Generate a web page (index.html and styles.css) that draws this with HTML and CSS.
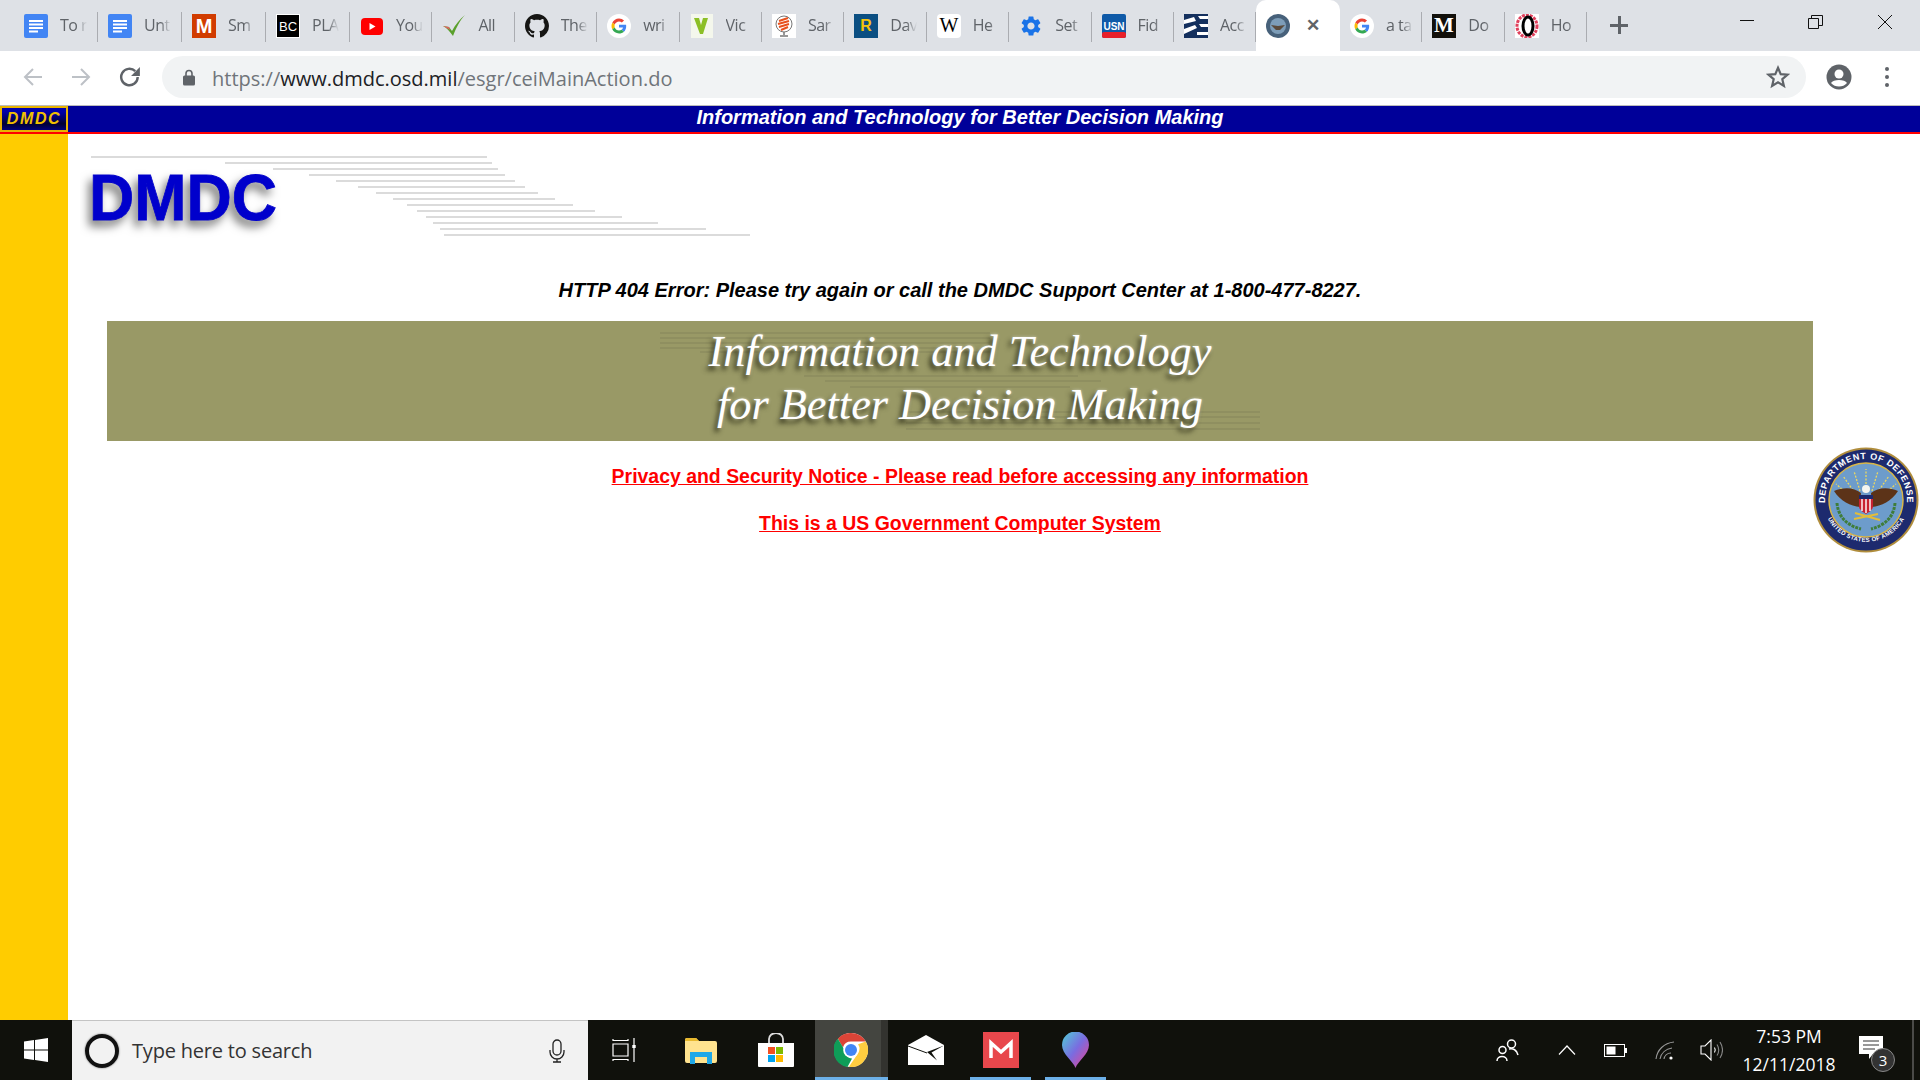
FILE: index.html
```html
<!DOCTYPE html>
<html lang="en">
<head>
  <meta charset="UTF-8">
  <title>DMDC</title>
  <link rel="stylesheet" href="styles.css">
</head>
<body>
  <svg class="defs" width="0" height="0">
    <symbol id="i-docs" viewBox="0 0 24 24"><rect x="0" width="24" height="24" rx="2" fill="#4285f4"/><path d="M5 7h14M5 10.5h14M5 14h14M5 17.5h9" stroke="#fff" stroke-width="1.8"/></symbol>
    <symbol id="i-google" viewBox="0 0 24 24"><circle cx="12" cy="12" r="12" fill="#fff"/><g transform="translate(4.5 4.5) scale(.3125)"><path fill="#EA4335" d="M24 9.5c3.54 0 6.71 1.22 9.21 3.6l6.85-6.85C35.9 2.38 30.47 0 24 0 14.62 0 6.51 5.38 2.56 13.22l7.98 6.19C12.43 13.72 17.74 9.5 24 9.5z"/><path fill="#4285F4" d="M46.98 24.55c0-1.57-.15-3.09-.38-4.55H24v9.02h12.94c-.58 2.96-2.26 5.48-4.78 7.18l7.73 6c4.51-4.18 7.09-10.36 7.09-17.65z"/><path fill="#FBBC05" d="M10.53 28.59c-.48-1.45-.76-2.99-.76-4.59s.27-3.14.76-4.59l-7.98-6.19C.92 16.46 0 20.12 0 24c0 3.88.92 7.54 2.56 10.78l7.97-6.19z"/><path fill="#34A853" d="M24 48c6.48 0 11.93-2.13 15.89-5.81l-7.73-6c-2.15 1.45-4.92 2.3-8.16 2.3-6.26 0-11.57-4.22-13.47-9.91l-7.98 6.19C6.51 42.62 14.62 48 24 48z"/></g></symbol>
  </svg>

  <div class="tabstrip">
    <div class="tab"><svg class="fav"><use href="#i-docs"/></svg><span class="tab-title">To r</span></div>
    <div class="tab"><svg class="fav"><use href="#i-docs"/></svg><span class="tab-title">Unt</span></div>
    <div class="tab"><svg class="fav" viewBox="0 0 24 24"><rect width="24" height="24" fill="#d13c00"/><text x="12" y="19" class="fav-m">M</text></svg><span class="tab-title">Sm</span></div>
    <div class="tab"><svg class="fav" viewBox="0 0 24 24"><rect width="24" height="24" fill="#000" stroke="#fff" stroke-width="2"/><text x="12" y="17" class="fav-bc">BC</text></svg><span class="tab-title">PLA</span></div>
    <div class="tab"><svg class="fav" viewBox="0 0 24 24"><rect x="1" y="4" width="22" height="17" rx="4" fill="#f00"/><path d="M9.5 9v7l6-3.5z" fill="#fff"/></svg><span class="tab-title">You</span></div>
    <div class="tab"><svg class="fav" viewBox="0 0 24 24"><path d="M1 12l6 1 3 4c3-6 8-12 13-16-5 5-9 13-12 21-3-4-6-8-10-10z" fill="#5aa02c"/><path d="M1 12l6 1 1 3z" fill="#e06060"/></svg><span class="tab-title">All</span></div>
    <div class="tab"><svg class="fav" viewBox="0 0 16 16"><path fill="#161614" d="M8 0C3.58 0 0 3.58 0 8c0 3.54 2.29 6.53 5.47 7.59.4.07.55-.17.55-.38 0-.19-.01-.82-.01-1.49-2.01.37-2.53-.49-2.69-.94-.09-.23-.48-.94-.82-1.13-.28-.15-.68-.52-.01-.53.63-.01 1.08.58 1.23.82.72 1.21 1.87.87 2.33.66.07-.52.28-.87.51-1.07-1.78-.2-3.64-.89-3.64-3.95 0-.87.31-1.59.82-2.15-.08-.2-.36-1.02.08-2.12 0 0 .67-.21 2.2.82.64-.18 1.32-.27 2-.27.68 0 1.36.09 2 .27 1.53-1.04 2.2-.82 2.2-.82.44 1.1.16 1.92.08 2.12.51.56.82 1.27.82 2.15 0 3.07-1.87 3.75-3.65 3.95.29.25.54.73.54 1.48 0 1.07-.01 1.93-.01 2.2 0 .21.15.46.55.38A8.013 8.013 0 0016 8c0-4.42-3.58-8-8-8z"/></svg><span class="tab-title">The</span></div>
    <div class="tab"><svg class="fav"><use href="#i-google"/></svg><span class="tab-title">wri</span></div>
    <div class="tab"><svg class="fav" viewBox="0 0 24 24"><rect width="22" height="24" x="1" fill="#f4f7ec"/><path d="M4 4h14l-5 16h-3z" fill="#8cbf26"/><path d="M9 4h4l-2 7z" fill="#f4f7ec"/></svg><span class="tab-title">Vic</span></div>
    <div class="tab"><svg class="fav" viewBox="0 0 24 24"><rect width="24" height="24" fill="#fff"/><circle cx="12" cy="10" r="8" fill="none" stroke="#777" stroke-width="1"/><path d="M7 7l9-3M6 10l11-3M7 13l10-3M9 16l7-3" stroke="#e8501c" stroke-width="2"/><path d="M12 18v3M8 22h8" stroke="#777" stroke-width="1.5"/></svg><span class="tab-title">Sar</span></div>
    <div class="tab"><svg class="fav" viewBox="0 0 24 24"><rect width="24" height="24" fill="#0b4f82"/><text x="12" y="17" class="fav-r">R</text></svg><span class="tab-title">Dav</span></div>
    <div class="tab"><svg class="fav" viewBox="0 0 24 24"><rect width="24" height="24" rx="4" fill="#fff"/><text x="12" y="18" class="fav-w">W</text></svg><span class="tab-title">He</span></div>
    <div class="tab"><svg class="fav" viewBox="0 0 24 24"><path fill="#1a73e8" d="M19.14 12.94c.04-.3.06-.61.06-.94 0-.32-.02-.64-.07-.94l2.03-1.58a.49.49 0 00.12-.61l-1.92-3.32a.488.488 0 00-.59-.22l-2.39.96c-.5-.38-1.03-.7-1.62-.94l-.36-2.54a.484.484 0 00-.48-.41h-3.84c-.24 0-.43.17-.47.41l-.36 2.54c-.59.24-1.13.57-1.62.94l-2.39-.96c-.22-.08-.47 0-.59.22L2.74 8.87c-.12.21-.08.47.12.61l2.03 1.58c-.05.3-.09.63-.09.94s.02.64.07.94l-2.03 1.58a.49.49 0 00-.12.61l1.92 3.32c.12.22.37.29.59.22l2.39-.96c.5.38 1.03.7 1.62.94l.36 2.54c.05.24.24.41.48.41h3.84c.24 0 .44-.17.47-.41l.36-2.54c.59-.24 1.13-.56 1.62-.94l2.39.96c.22.08.47 0 .59-.22l1.92-3.32c.12-.22.07-.47-.12-.61l-2.01-1.58zM12 15.6c-1.98 0-3.6-1.62-3.6-3.6s1.62-3.6 3.6-3.6 3.6 1.62 3.6 3.6-1.62 3.6-3.6 3.6z"/></svg><span class="tab-title">Set</span></div>
    <div class="tab"><svg class="fav" viewBox="0 0 24 24"><rect width="24" height="24" rx="2" fill="#0f5aa8"/><rect y="18" width="24" height="6" rx="2" fill="#e8202a"/><text x="12" y="16" class="fav-usn">USN</text></svg><span class="tab-title">Fid</span></div>
    <div class="tab"><svg class="fav" viewBox="0 0 24 24"><rect width="24" height="24" fill="#14305e"/><path d="M0 6l10-3 2 4-12 3zM0 15l11-4 2 3-13 6zM14 2h10v3h-8zM15 10h9v3h-7zM13 18h11v3H13z" fill="#fff"/></svg><span class="tab-title">Acc</span></div>
    <div class="tab tab-active"><svg class="fav" viewBox="0 0 24 24"><circle cx="12" cy="12" r="12" fill="#47617a"/><circle cx="12" cy="12" r="8" fill="#7d9db8"/><path d="M5 11l7 1 7-1-5 5h-4z" fill="#5b4a3a"/></svg><span class="tab-close">&#10005;</span></div>
    <div class="tab"><svg class="fav"><use href="#i-google"/></svg><span class="tab-title">a ta</span></div>
    <div class="tab"><svg class="fav" viewBox="0 0 24 24"><rect width="24" height="24" fill="#12100b"/><text x="12" y="18" class="fav-medium">M</text></svg><span class="tab-title">Do</span></div>
    <div class="tab"><svg class="fav" viewBox="0 0 24 24"><rect width="24" height="24" fill="#fff"/><ellipse cx="12" cy="12" rx="10" ry="11" fill="none" stroke="#e0405c" stroke-width="3" stroke-dasharray="3 1"/><ellipse cx="13" cy="12" rx="5" ry="9" fill="none" stroke="#000" stroke-width="3"/></svg><span class="tab-title">Ho</span></div>
    <div class="newtab"></div>
    <div class="winbtns">
      <svg class="winbtn" viewBox="0 0 16 16"><path d="M1 6.5h14" stroke="#111" fill="none"/></svg>
      <svg class="winbtn" viewBox="0 0 16 16"><path d="M.5 4.5h10v10H.5zM3.5 4V1.5h11v10H11" stroke="#111" fill="none"/></svg>
      <svg class="winbtn" viewBox="0 0 16 16"><path d="M1 1l14 14M15 1L1 15" stroke="#111" fill="none"/></svg>
    </div>
  </div>

  <div class="toolbar">
    <svg class="nav-icon nav-off" viewBox="0 0 20 20"><path d="M19 10H3M10 2l-8 8 8 8" fill="none" stroke="#bdc1c6" stroke-width="2"/></svg>
    <svg class="nav-icon nav-off" viewBox="0 0 20 20"><path d="M1 10h16M10 2l8 8-8 8" fill="none" stroke="#bdc1c6" stroke-width="2"/></svg>
    <svg class="nav-icon" viewBox="0 0 20 20"><path d="M17 10a7.5 7.5 0 1 1-2.2-5.3" fill="none" stroke="#5f6368" stroke-width="2.2"/><path d="M19 1v8h-8z" fill="#5f6368"/></svg>
    <div class="omnibox">
      <svg class="lock" viewBox="0 0 12 17"><path d="M3 7V4.5a3 3 0 0 1 6 0V7" fill="none" stroke="#5f6368" stroke-width="1.6"/><rect y="6.5" width="12" height="10" rx="1.5" fill="#5f6368"/></svg>
      <span class="url"><span class="url-dim">https://</span>www.dmdc.osd.mil<span class="url-dim">/esgr/ceiMainAction.do</span></span>
      <svg class="star" viewBox="0 0 24 24"><path d="M12 2.8l2.7 6.3 6.8.6-5.2 4.5 1.6 6.7L12 17.3l-5.9 3.6 1.6-6.7-5.2-4.5 6.8-.6z" fill="none" stroke="#5f6368" stroke-width="2.2"/></svg>
    </div>
    <svg class="profile" viewBox="0 0 26 26"><circle cx="13" cy="13" r="12.5" fill="#5f6368"/><circle cx="13" cy="10" r="4.5" fill="#fff"/><path d="M5 19c2-4 14-4 16 0-2 2.500-5 3.500-8 3.500S7 21.500 5 19z" fill="#fff"/></svg>
    <div class="dots"><i></i><i></i><i></i></div>
  </div>

  <div class="page">
    <div class="topbar">
      <div class="badge">DMDC</div>
      <div class="topbar-title">Information and Technology for Better Decision Making</div>
    </div>
    <div class="page-body">
      <div class="sidebar"></div>
      <div class="main">
        <svg class="logo" viewBox="0 0 700 90">
          <g class="logo-lines">
            <path d="M11 7h396M145 13h267M193 19h225M229 25h196M256 31h179M278 37h167M296 43h162M313 49h162M327 55h166M337 61h178M346 67h196M353 73h225M360 79h266M364 85h306"/>
          </g>
          <text x="9" y="70" class="logo-text" textLength="188" lengthAdjust="spacingAndGlyphs">DMDC</text>
        </svg>
        <div class="error-msg">HTTP 404 Error: Please try again or call the DMDC Support Center at 1-800-477-8227.</div>
        <div class="banner">
          <svg class="banner-lines" viewBox="0 0 600 120">
            <path d="M0 12h330M0 17h330M0 22h330M0 27h300M40 31h290M144 55h274M165 60h276M190 66h220M246 91h354M246 96h354M246 102h354M246 108h354"/>
          </svg>
          <div class="banner-text">Information and Technology<br>for Better Decision Making</div>
        </div>
        <a class="notice" href="#">Privacy and Security Notice - Please read before accessing any information</a>
        <a class="notice" href="#">This is a US Government Computer System</a>
      </div>
      <svg class="seal" viewBox="0 0 106 106">
        <circle cx="53" cy="53" r="52.500" fill="#b08d3c"/>
        <circle cx="53" cy="53" r="50.500" fill="#1d2a6e"/>
        <circle cx="53" cy="53" r="37" fill="#6d9ccb" stroke="#d9b648" stroke-width="1.500"/>
        <defs>
          <path id="seal-top" d="M17.500 73.500a41 41 0 1 1 71 0"/>
          <path id="seal-bottom" d="M14 70a43 43 0 0 0 78 0"/>
        </defs>
        <text class="seal-text"><textPath href="#seal-top" startOffset="50%">DEPARTMENT OF DEFENSE</textPath></text>
        <text class="seal-text seal-small"><textPath href="#seal-bottom" startOffset="50%">UNITED STATES OF AMERICA</textPath></text>
        <path d="M53 44V22M47 44l-6-20M59 44l6-20M42 46L30 29M64 46l12-17M37 49L23 37M69 49l14-12" stroke="#ecd860" stroke-width="1.300" stroke-dasharray="2 1.500"/>
        <path d="M21 44c9-4 20-4 27 2l-1 14c-9-1-20-6-26-16zM85 44c-9-4-20-4-27 2l1 14c9-1 20-6 26-16z" fill="#5c3318"/>
        <circle cx="53" cy="42" r="4" fill="#f5f5f0"/>
        <path d="M46 48h14v11c0 4-4 6-7 8-3-2-7-4-7-8z" fill="#c8202f"/>
        <path d="M46 48h14v4H46z" fill="#1d2a6e"/>
        <path d="M49 52v12M53 52v14M57 52v12" stroke="#fff" stroke-width="1.400"/>
        <path d="M41 72l24-5M42 66l25 7" stroke="#e3bd3a" stroke-width="2"/>
        <path d="M24 56c1 12 8 22 24 26M82 56c-1 12-8 22-24 26" fill="none" stroke="#3f7d3a" stroke-width="3" stroke-dasharray="3 1"/>
      </svg>
    </div>
  </div>

  <div class="taskbar">
    <div class="start">
      <svg class="winlogo" viewBox="0 0 24 24"><path d="M0 3.400l10-1.400v9.500H0zM11 1.900L24 0v11.500H11zM0 12.500h10V22L0 20.600zM11 12.500h13V24l-13-1.900z" fill="#fff"/></svg>
    </div>
    <div class="searchbox">
      <span class="cortana"></span>
      <span class="search-text">Type here to search</span>
      <svg class="mic" viewBox="0 0 16 24"><rect x="4" y="1" width="8" height="15" rx="4" fill="none" stroke="#222" stroke-width="1.300"/><path d="M1 11v2a7 7 0 0 0 14 0v-2M8 20v3M4 23h8" fill="none" stroke="#222" stroke-width="1.300"/></svg>
    </div>
    <div class="taskicons">
      <div class="taskicon">
        <svg class="ti-view" viewBox="0 0 24 24"><path d="M1 1v1.500h15V1M1 23v-1.500h15V23M1 6h15v12H1zM22 0v7M22 10v14" fill="none" stroke="#fff" stroke-width="1.200"/><rect x="20.300" y="7" width="3.400" height="3" fill="#fff"/></svg>
      </div>
      <div class="taskicon">
        <svg class="ti-files" viewBox="0 0 32 27"><path d="M0 3q0-2 2-2h9l3 3h16q2 0 2 2v18q0 2-2 2H2q-2 0-2-2z" fill="#ffe38f"/><path d="M0 3q0-2 2-2h9l3 3H0z" fill="#e8b92e"/><path d="M5 27V15h22v12h-5v-7H10v7z" fill="#1fa8e8"/></svg>
      </div>
      <div class="taskicon">
        <svg class="ti-store" viewBox="0 0 36 34"><path d="M11 11V6a7 6 0 0 1 14 0v5" fill="none" stroke="#ddd" stroke-width="1.800"/><path d="M0 10h36v23q0 1-1 1H1q-1 0-1-1z" fill="#fff"/><rect x="10" y="14" width="7" height="7" fill="#f25022"/><rect x="18" y="14" width="7" height="7" fill="#7fba00"/><rect x="10" y="22" width="7" height="7" fill="#00a4ef"/><rect x="18" y="22" width="7" height="7" fill="#ffb900"/></svg>
      </div>
      <div class="taskicon taskicon-active taskicon-on">
        <svg class="ti-chrome" viewBox="0 0 48 48"><circle cx="24" cy="24" r="24" fill="#fff"/><path d="M24 0a24 24 0 0 1 20.800 12H24a12 12 0 0 0-11.400 8.300L5.500 8A24 24 0 0 1 24 0z" fill="#db4437"/><path d="M5.500 8l11.500 19.500a8 8 0 0 0 8.500 8.400L19 48A24 24 0 0 1 5.500 8z" fill="#0f9d58"/><path d="M44.800 12A24 24 0 0 1 21 47.800l12.400-18.300A12 12 0 0 0 34 16z" fill="#ffcd40"/><circle cx="24" cy="24" r="11" fill="#fff"/><circle cx="24" cy="24" r="8.500" fill="#4285f4"/></svg>
      </div>
      <div class="taskicon">
        <svg class="ti-mail" viewBox="0 0 36 30"><path d="M0 10L18 0l18 10v20H0z" fill="#fff"/><path d="M0 11l19 7" fill="none" stroke="#10110c"/><path d="M36 10.500L19 17l10 8.500-5.500-8z" fill="#10110c"/></svg>
      </div>
      <div class="taskicon taskicon-on">
        <svg class="ti-gmail" viewBox="0 0 36 36"><rect width="36" height="36" fill="#e8474c"/><path d="M8 26V11l10 9 10-9v15" fill="none" stroke="#fff" stroke-width="3.500"/></svg>
      </div>
      <div class="taskicon taskicon-on">
        <svg class="ti-maps" viewBox="0 0 27 36"><defs><linearGradient id="maps-grad" x1="0" y1="0" x2="1" y2="1"><stop offset="0" stop-color="#4fd0d8"/><stop offset=".5" stop-color="#7a6ce0"/><stop offset="1" stop-color="#f0408c"/></linearGradient></defs><path d="M13.500 36C11 29 0 22 0 13a13.500 13.500 0 0 1 27 0c0 9-11 16-13.500 23z" fill="url(#maps-grad)"/></svg>
      </div>
    </div>
    <div class="tray">
      <svg class="tray-people" viewBox="0 0 23 23" fill="none" stroke="#fff" stroke-width="1.500"><circle cx="15.500" cy="5" r="4"/><circle cx="6.500" cy="11" r="3.500"/><path d="M1 22c0-6 10-6 10 0M13 10c4-1 8 1 9 6"/></svg>
      <svg class="tray-chevron" viewBox="0 0 18 10"><path d="M1 9.500L9 1l8 8.500" fill="none" stroke="#fff" stroke-width="1.200"/></svg>
      <svg class="tray-battery" viewBox="0 0 23 13"><rect x=".5" y=".5" width="20" height="12" fill="none" stroke="#fff"/><rect x="2.500" y="2.500" width="9" height="8" fill="#fff"/><rect x="21" y="4" width="2" height="5" fill="#fff"/></svg>
      <svg class="tray-wifi" viewBox="0 0 20 19" fill="none" stroke="#999" stroke-width="1.100"><path d="M1 18C2 9 9 2 19 1M5 18c1-6 6-10 12-11M9 18c.5-3 3-6 7-6"/><circle cx="16" cy="17" r="1.600" fill="#fff" stroke="none"/></svg>
      <svg class="tray-sound" viewBox="0 0 23 22" fill="none" stroke="#fff" stroke-width="1.100"><path d="M1 7h4l6-6v20l-6-6H1z"/><path d="M14.500 8.500q1.500 2.500 0 5" /><path d="M17 5.500q3.500 5.500 0 11M20 3q5 8 0 16" stroke="#888"/></svg>
      <div class="clock"><span>7:53 PM</span><span>12/11/2018</span></div>
      <div class="notif">
        <svg class="notif-icon" viewBox="0 0 24 24"><path d="M0 0h24v18H14l-4 5v-5H0z" fill="#fff"/><path d="M4 5h16M4 9h16M4 13h12" stroke="#333"/></svg>
        <span class="notif-count">3</span>
      </div>
      <div class="show-desktop"></div>
    </div>
  </div>
</body>
</html>
```

FILE: styles.css
```css
html, body {
  height: 100%;
  margin: 0;
}

body {
  display: flex;
  flex-direction: column;
  width: 1920px;
  height: 1080px;
  overflow: hidden;
  background-color: #ffffff;
  font-family: "Liberation Sans", Arial, sans-serif;
}

.defs {
  display: block;
  height: 0;
}

/* browser tabs */
.tabstrip {
  display: flex;
  flex: 0 0 51px;
  padding-left: 14px;
  background-color: #dee1e6;
}

.tab {
  position: relative;
  display: flex;
  align-items: center;
  flex: 0 0 82.4px;
  height: 51px;
  box-sizing: border-box;
  padding-left: 10px;
}

.tab:nth-child(-n+4) {
  flex-basis: 84px;
}

.tab::after {
  content: "";
  position: absolute;
  right: 0;
  top: 12px;
  width: 1px;
  height: 30px;
  background-color: #aaacb1;
}

.fav {
  flex: none;
  width: 24px;
  height: 24px;
}

.tab-title {
  width: 27px;
  margin: -2px 0 0 12px;
  overflow: hidden;
  white-space: nowrap;
  font-family: "Open Sans", sans-serif;
  font-size: 16px;
  letter-spacing: -0.5px;
  color: #5f6368;
  -webkit-mask-image: linear-gradient(to right, #000 60%, transparent);
  mask-image: linear-gradient(to right, #000 60%, transparent);
}

.tab-active {
  flex-basis: 83.6px;
  background-color: #ffffff;
  border-radius: 10px 10px 0 0;
}

.tab-active::after {
  display: none;
}

.tab-close {
  margin-left: 16px;
  font-size: 17px;
  font-weight: bold;
  color: #5f6368;
}

.fav-m, .fav-bc, .fav-r, .fav-w, .fav-usn, .fav-medium {
  text-anchor: middle;
  font-weight: bold;
}

.fav-m { font-size: 20px; fill: #fff; }
.fav-bc { font-size: 13px; fill: #fff; font-weight: normal; }
.fav-r { font-size: 16px; fill: #f4c20d; }
.fav-w { font-family: "Liberation Serif", serif; font-size: 20px; fill: #000; font-weight: normal; }
.fav-usn { font-size: 10px; fill: #fff; }
.fav-medium { font-family: "Liberation Serif", serif; font-size: 21px; fill: #fff; }

.newtab {
  position: relative;
  width: 18px;
  height: 18px;
  margin: 16px 0 0 23px;
  background: linear-gradient(#5f6368, #5f6368) center / 100% 3px no-repeat,
              linear-gradient(#5f6368, #5f6368) center / 3px 100% no-repeat;
}

.winbtns {
  display: flex;
  gap: 53px;
  margin-left: auto;
  padding: 14px 27px 0 0;
}

.winbtn {
  width: 16px;
  height: 16px;
}

/* address bar row */
.toolbar {
  display: flex;
  align-items: center;
  flex: 0 0 55px;
  box-sizing: border-box;
  border-bottom: 1px solid #bcbcbc;
  padding: 0 0 2px 23px;
  background-color: #ffffff;
}

.nav-icon {
  width: 20px;
  height: 20px;
  margin-right: 28px;
}

.nav-icon + .nav-icon + .nav-icon {
  width: 22px;
  height: 22px;
  margin-right: 21px;
}

.omnibox {
  display: flex;
  align-items: center;
  width: 1644px;
  height: 42px;
  box-sizing: border-box;
  padding: 0 16px 0 21px;
  border-radius: 21px;
  background-color: #f1f3f4;
}

.lock {
  width: 12px;
  height: 17px;
}

.url {
  margin: 2px 0 0 17px;
  font-family: "Open Sans", sans-serif;
  font-size: 20px;
  color: #202124;
}

.url-dim {
  color: #70757a;
}

.star {
  width: 24px;
  height: 24px;
  margin-left: auto;
}

.profile {
  width: 26px;
  height: 26px;
  margin-left: 20px;
}

.dots {
  display: flex;
  flex-direction: column;
  gap: 4px;
  margin-left: 33px;
}

.dots i {
  display: block;
  width: 4px;
  height: 4px;
  border-radius: 50%;
  background-color: #5f6368;
}

/* the web page itself */
.page {
  display: flex;
  flex-direction: column;
  flex: 1;
  min-height: 0;
}

.topbar {
  position: relative;
  display: flex;
  justify-content: center;
  flex: 0 0 28px;
  box-sizing: border-box;
  border-bottom: 2px solid #ff0000;
  background-color: #000099;
}

.badge {
  position: absolute;
  left: 0;
  top: 0;
  width: 68px;
  height: 26px;
  box-sizing: border-box;
  border: 1px solid #e8b400;
  outline: 1px solid #e8b400;
  outline-offset: -2px;
  text-align: center;
  font-size: 16px;
  font-weight: bold;
  font-style: italic;
  line-height: 24px;
  letter-spacing: 1.6px;
  color: #f0c000;
  background: linear-gradient(#0000aa 20%, #000033 70%, #000088);
}

.topbar-title {
  font-size: 20px;
  font-weight: bold;
  font-style: italic;
  line-height: 22px;
  color: #ffffff;
}

.page-body {
  position: relative;
  display: flex;
  flex: 1;
  min-height: 0;
}

.sidebar {
  flex: 0 0 68px;
  background-color: #ffcc00;
}

.main {
  display: flex;
  flex-direction: column;
  align-items: center;
  flex: 1;
  padding-right: 68px;
}

.logo {
  align-self: flex-start;
  width: 700px;
  height: 90px;
  margin: 16px 0 0 12px;
}

.logo-lines {
  stroke: #d0d0d0;
  stroke-width: 1.6;
  fill: none;
}

.logo-text {
  font-size: 64px;
  font-weight: bold;
  fill: #0000cc;
  stroke: #0000cc;
  stroke-width: 0.8px;
  filter: drop-shadow(-4px 6px 5px #7a7a7a);
}

.error-msg {
  margin-top: 38px;
  font-size: 20px;
  font-weight: bold;
  font-style: italic;
  line-height: 24px;
  color: #000000;
}

.banner {
  display: grid;
  justify-items: center;
  align-items: center;
  width: 1706px;
  height: 120px;
  margin-top: 19px;
  background-color: #999966;
}

.banner-lines, .banner-text {
  grid-area: 1 / 1;
}

.banner-lines {
  width: 600px;
  height: 120px;
  fill: none;
  stroke: #85855a;
  stroke-width: 1;
}

.banner-text {
  position: relative;
  margin-bottom: 7px;
  text-align: center;
  font-family: "Liberation Serif", serif;
  font-size: 44.3px;
  font-style: italic;
  line-height: 53px;
  color: #ffffff;
  text-shadow: -3px 4px 5px #33331a, 0 0 3px rgba(255, 255, 255, 0.6);
}

.notice {
  margin-top: 23px;
  font-size: 19.45px;
  font-weight: bold;
  line-height: 24px;
  color: #ff0000;
}

.seal {
  position: absolute;
  right: 1px;
  top: 313px;
  width: 106px;
  height: 106px;
}

.seal-text {
  font-size: 9px;
  font-weight: bold;
  letter-spacing: 0.6px;
  text-anchor: middle;
  fill: #ffffff;
}

.seal-small {
  font-size: 6px;
  letter-spacing: 0.3px;
}

/* windows taskbar */
.taskbar {
  display: flex;
  flex: 0 0 60px;
  box-sizing: border-box;
  background-color: #10110c;
}

.start {
  display: flex;
  align-items: center;
  justify-content: center;
  flex: 0 0 72px;
}

.winlogo {
  width: 24px;
  height: 24px;
}

.searchbox {
  display: flex;
  align-items: center;
  flex: 0 0 516px;
  box-sizing: border-box;
  border-top: 1px solid #c4c4c4;
  padding-left: 13px;
  background-color: #f2f2f2;
}

.cortana {
  width: 34px;
  height: 34px;
  box-sizing: border-box;
  border: 4px solid #111111;
  border-radius: 50%;
  box-shadow: 0 0 2px #666;
}

.search-text {
  margin-left: 13px;
  font-family: "Open Sans", sans-serif;
  font-size: 20px;
  letter-spacing: -0.2px;
  color: #333333;
}

.mic {
  width: 16px;
  height: 24px;
  margin-left: auto;
  margin-right: 23px;
}

.taskicons {
  display: flex;
}

.taskicon {
  position: relative;
  display: flex;
  align-items: center;
  justify-content: center;
  width: 75px;
  height: 60px;
}

.taskicon-on::after {
  content: "";
  position: absolute;
  left: 7px;
  right: 7px;
  bottom: 0;
  height: 3px;
  background-color: #6cb0e8;
}

.taskicon-active {
  background: linear-gradient(to right, transparent 2px, #444540 2px, #444540 68px, #33332f 68px);
}

.taskicon-active::after {
  left: 2px;
  right: 0;
}

.ti-view { width: 24px; height: 24px; margin-right: 3px; }
.ti-files { width: 32px; height: 27px; }
.ti-store { width: 36px; height: 34px; }
.ti-chrome { width: 34px; height: 34px; }
.ti-mail { width: 36px; height: 30px; }
.ti-gmail { width: 36px; height: 36px; }
.ti-maps { width: 27px; height: 36px; }

.tray {
  display: flex;
  align-items: center;
  flex: 1;
  padding-left: 383px;
  color: #ffffff;
}

.tray-people { width: 23px; height: 23px; }
.tray-chevron { width: 18px; height: 10px; margin-left: 39px; }
.tray-battery { width: 23px; height: 13px; margin-left: 28px; }
.tray-wifi { width: 20px; height: 19px; margin-left: 28px; }
.tray-sound { width: 23px; height: 22px; margin-left: 25px; }

.clock {
  display: flex;
  flex-direction: column;
  align-items: center;
  width: 94px;
  margin-left: 19px;
  font-family: "Open Sans", sans-serif;
  font-size: 17.5px;
  line-height: 28px;
}

.notif {
  position: relative;
  width: 24px;
  height: 24px;
  margin-left: 23px;
  margin-top: -4px;
}

.notif-icon {
  display: block;
  width: 24px;
  height: 24px;
}

.notif-count {
  position: absolute;
  left: 12px;
  top: 12px;
  width: 24px;
  height: 24px;
  box-sizing: border-box;
  border: 1px solid #888;
  border-radius: 50%;
  background-color: #333;
  text-align: center;
  font-family: "Open Sans", sans-serif;
  font-size: 15px;
  line-height: 22px;
}

.show-desktop {
  align-self: stretch;
  width: 2px;
  margin-left: auto;
  margin-right: 6px;
  background-color: #4a4a48;
}
```
